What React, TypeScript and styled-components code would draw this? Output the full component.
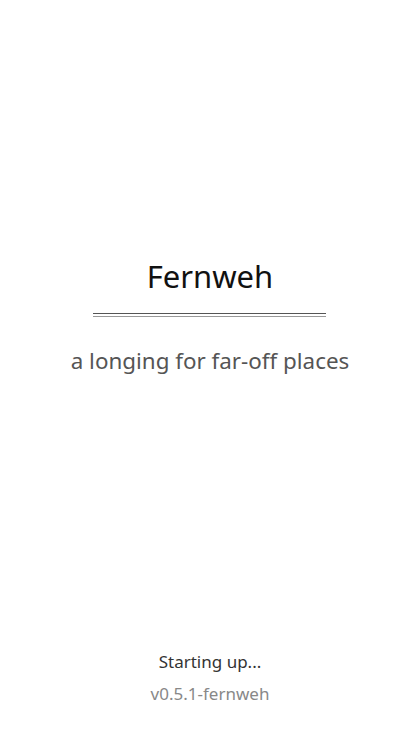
import React from "react";
import styled, { createGlobalStyle } from "styled-components";

const Global = createGlobalStyle`
  html, body { margin: 0; padding: 0; background: #ffffff; }
  body { font-family: "Noto Sans", "Open Sans", sans-serif; }
`;

const Screen = styled.div`
  height: 746px;
  display: flex;
  flex-direction: column;
  align-items: center;
  box-sizing: border-box;
`;

const Hero = styled.main`
  flex: 1;
  display: flex;
  flex-direction: column;
  align-items: center;
  padding-top: 252px;
`;

const Title = styled.h1`
  margin: 0;
  font-size: 31px;
  font-weight: 400;
  color: #111;
  line-height: 48px;
`;

const Rule = styled.div`
  width: 233px;
  height: 2px;
  border-top: 1px solid #555;
  border-bottom: 1px solid #999;
  margin-top: 13px;
`;

const Subtitle = styled.p`
  margin: 28px 0 0;
  font-size: 22.4px;
  font-weight: 400;
  color: #555;
  line-height: 32px;
`;

const Footer = styled.footer`
  display: flex;
  flex-direction: column;
  align-items: center;
  gap: 8px;
  padding-bottom: 40px;
`;

const Status = styled.div`
  font-size: 17px;
  color: #333;
  line-height: 24px;
`;

const Version = styled.div`
  font-size: 17px;
  color: #888;
  line-height: 24px;
`;

export default function App() {
  return (
    <>
      <Global />
      <Screen>
        <Hero>
          <Title>Fernweh</Title>
          <Rule />
          <Subtitle>a longing for far-off places</Subtitle>
        </Hero>
        <Footer>
          <Status>Starting up...</Status>
          <Version>v0.5.1-fernweh</Version>
        </Footer>
      </Screen>
    </>
  );
}
